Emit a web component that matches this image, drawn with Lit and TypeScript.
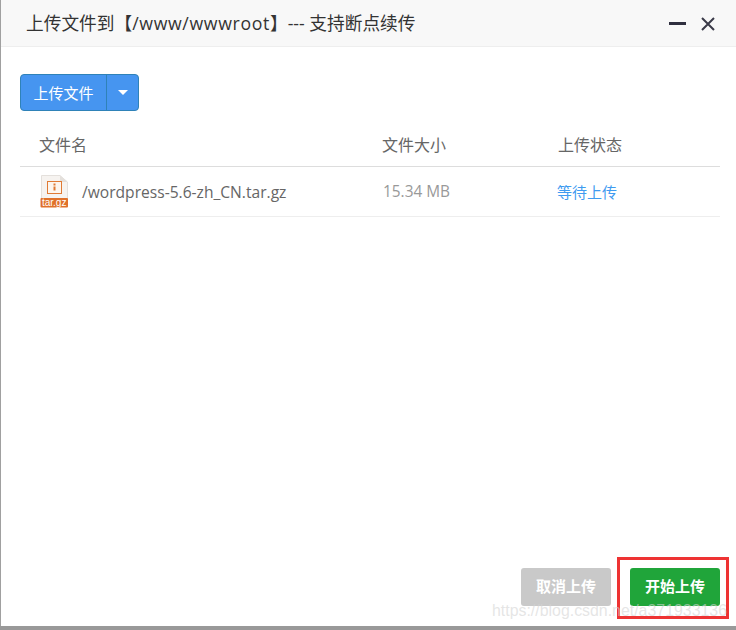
import { LitElement, html, css } from "lit";
import { customElement } from "lit/decorators.js";

@customElement("app-root")
export class AppRoot extends LitElement {
  static styles = css`
    :host {
      display: flex;
      flex-direction: column;
      position: relative;
      width: 736px;
      height: 630px;
      overflow: hidden;
      background: #fff;
      font-family: "Open Sans", "Noto Sans CJK SC", sans-serif;
      color: #555;
    }
    .dialog {
      flex: 1;
      display: flex;
      flex-direction: column;
      border-left: 1px solid #a0a0a0;
      min-height: 0;
    }
    .head {
      height: 46px;
      flex: none;
      background: #f8f8f8;
      border-bottom: 1px solid #eee;
      display: flex;
      align-items: center;
      padding: 0 20px 0 25px;
    }
    .title {
      flex: 1;
      font-size: 17.7px;
      color: #333;
      white-space: nowrap;
      padding-bottom: 2px;
    }
    .latin { letter-spacing: 0.65px; }
    .min { width: 17px; height: 3px; background: #2f2f3f; margin-right: 14px; margin-top: 1px; }
    .close { width: 16px; height: 16px; display: block; margin-top: 1px; }
    .body {
      flex: 1;
      display: flex;
      flex-direction: column;
      padding: 27px 16px 20px 19px;
      min-height: 0;
    }
    .split {
      display: flex;
      align-self: flex-start;
      height: 37px;
      border: 1px solid #2f82b8;
      border-radius: 4px;
      background: #4695f0;
      color: #fff;
      font-size: 15px;
      box-sizing: border-box;
      width: 119px;
    }
    .split .main {
      width: 85px;
      flex: none;
      display: flex;
      align-items: center;
      justify-content: center;
      border-right: 1px solid #2f82b8;
    }
    .split .drop { flex: 1; display: flex; align-items: center; justify-content: center; }
    .caret {
      width: 0;
      height: 0;
      border-left: 5px solid transparent;
      border-right: 5px solid transparent;
      border-top: 5px solid #fff;
    }
    .row {
      display: grid;
      grid-template-columns: 362px 176px 1fr;
      align-items: center;
    }
    .th {
      box-sizing: content-box;
      height: 44px;
      padding-top: 11px;
      border-bottom: 1px solid #ddd;
      color: #666;
      font-size: 16px;
    }
    .th span { padding-left: 19px; }
    .th span + span { padding-left: 0; }
    .tr {
      height: 49px;
      border-bottom: 1px solid #eee;
      color: #666;
      font-size: 15.6px;
    }
    .file { display: flex; align-items: center; gap: 13px; padding-left: 20px; }
    .file svg { width: 29px; height: 33px; flex: none; }
    .size { color: #999; font-size: 15.4px; padding-left: 1px; }
    .status { color: #3f9bf0; font-size: 15px; margin-left: -1px; }
    .spacer { flex: 1; }
    .actions { display: flex; justify-content: flex-end; gap: 19px; }
    .btn {
      width: 90px;
      height: 38px;
      border-radius: 3px;
      color: #fff;
      font-size: 15px;
      font-weight: 700;
      display: flex;
      align-items: center;
      justify-content: center;
      padding-bottom: 3px;
      box-sizing: border-box;
    }
    .cancel { background: #c9c9c9; }
    .start { background: #20a53a; }
    .band { height: 4px; flex: none; background: #999; }
    .mark {
      position: absolute;
      left: 617px;
      top: 557px;
      width: 112px;
      height: 62px;
      box-sizing: border-box;
      border: 3px solid #ee3333;
      pointer-events: none;
    }
    .wm {
      position: absolute;
      right: 9px;
      top: 602px;
      font-family: "Liberation Sans", sans-serif;
      font-size: 15.9px;
      color: rgba(212, 212, 212, 0.6);
      white-space: nowrap;
    }
  `;

  render() {
    return html`
      <div class="dialog">
        <div class="head">
          <div class="title">上传文件到【<span class="latin">/www/wwwroot</span>】--- 支持断点续传</div>
          <div class="min"></div>
          <svg class="close" viewBox="0 0 16 16">
            <path d="M2 2 L14 14 M14 2 L2 14" stroke="#3a3a48" stroke-width="2" fill="none" />
          </svg>
        </div>
        <div class="body">
          <div class="split">
            <div class="main">上传文件</div>
            <div class="drop"><span class="caret"></span></div>
          </div>
          <div class="row th">
            <span>文件名</span><span>文件大小</span><span>上传状态</span>
          </div>
          <div class="row tr">
            <div class="file">
              <svg viewBox="0 0 29 33">
                <path d="M1.5 0.5 H20 L27.5 7 V24 H1.5 Z" fill="#f6f3f0" stroke="#e4e0dc" />
                <path d="M20 0.5 V7 H27.5 Z" fill="#e4e0dc" />
                <rect x="7.5" y="6.5" width="14" height="12" fill="#fdf6ee" stroke="#e07a34" />
                <rect x="13.5" y="8.5" width="2" height="2" fill="#e07a34" />
                <rect x="13.5" y="11.5" width="2" height="4" fill="#e07a34" />
                <rect x="0.5" y="23" width="27.5" height="9.5" rx="1" fill="#e0712a" />
                <text x="14.2" y="31" text-anchor="middle" font-family="Liberation Sans" font-size="10" fill="#fff">tar.gz</text>
              </svg>
              <span>/wordpress-5.6-zh_CN.tar.gz</span>
            </div>
            <span class="size">15.34 MB</span>
            <span class="status">等待上传</span>
          </div>
          <div class="spacer"></div>
          <div class="actions">
            <div class="btn cancel">取消上传</div>
            <div class="btn start">开始上传</div>
          </div>
        </div>
      </div>
      <div class="band"></div>
      <div class="mark"></div>
      <div class="wm">https://blog.csdn.net/a371933136</div>
    `;
  }
}
